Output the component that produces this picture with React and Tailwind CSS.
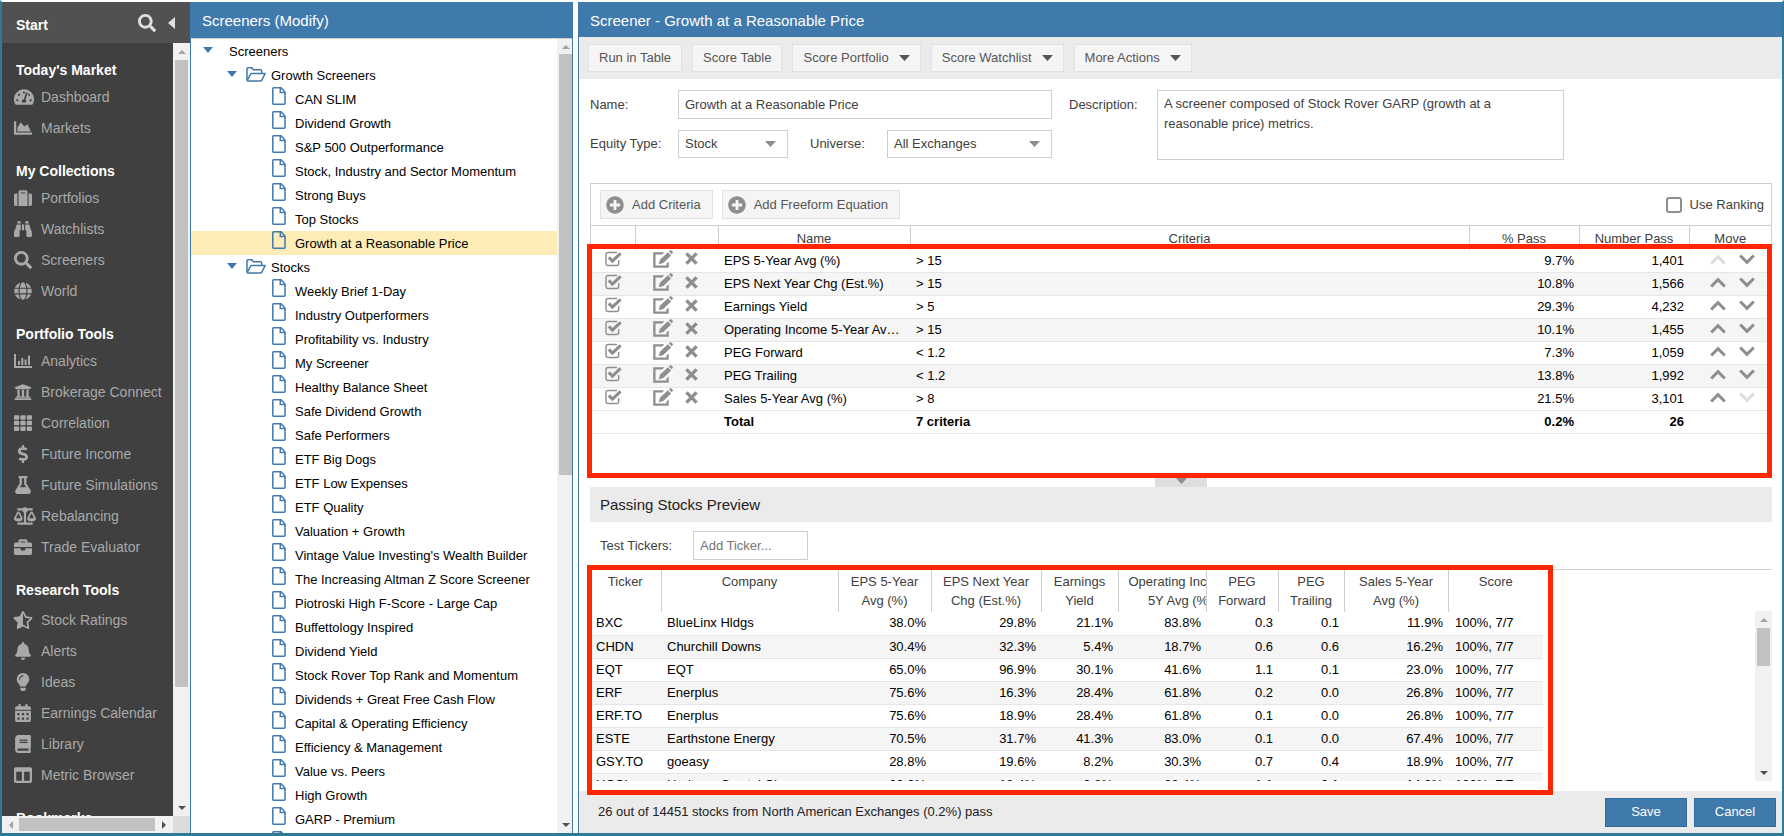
import React from "react";
import {
  FaTachometerAlt, FaChartArea, FaSuitcase, FaBinoculars, FaSearch, FaGlobe, FaUniversity, FaTh,
  FaDollarSign, FaFlask, FaBalanceScale, FaBriefcase, FaStarHalfAlt, FaBell, FaLightbulb, FaCalendarAlt,
  FaBook, FaColumns, FaPlusCircle,
} from "react-icons/fa";

function BarsIcon(props) {
  return (
    <svg viewBox="0 0 18 18" fill="currentColor" {...props}>
      <path d="M0 2h2v12h16v2H0z" />
      <path d="M4 9h2v4H4zM7.300 6h2v7h-2zM10.600 7.500h2v5.500h-2zM14 3.500h2V13h-2z" />
    </svg>
  );
}

function FileIcon() {
  return (
    <svg viewBox="0 0 14 18" className="h-[18px] w-[14px] shrink-0" fill="none" stroke="#4079ac" strokeWidth="1.500">
      <path d="M1.500 .800h7.500l4 4.200v11.500a.700.700 0 0 1-.700.700H1.500a.700.700 0 0 1-.700-.700V1.500a.700.700 0 0 1 .700-.700z" />
      <path d="M8.300 1v4.500h4.600" />
    </svg>
  );
}

function FolderIcon() {
  return (
    <svg viewBox="0 0 20 15" className="h-[15px] w-5 shrink-0" fill="none" stroke="#4079ac" strokeWidth="1.500" strokeLinejoin="round">
      <path d="M1 13V2a1.200 1.200 0 0 1 1.200-1.200h3.600L7.300 2.800h7.200a1.200 1.200 0 0 1 1.200 1.200v2.200" />
      <path d="M1.200 13.300 5 6.500h14.200l-3.400 6.600a1.500 1.500 0 0 1-1.300.800H1.700c-.600 0-.800-.200-.500-.600z" />
    </svg>
  );
}

function Down({ className }) {
  return (
    <svg viewBox="0 0 10 6" preserveAspectRatio="none" className={className} fill="currentColor" aria-hidden="true">
      <path d="M0 0h10L5 6z" />
    </svg>
  );
}
function Up({ className }) {
  return (
    <svg viewBox="0 0 10 6" preserveAspectRatio="none" className={className} fill="currentColor" aria-hidden="true">
      <path d="M0 6h10L5 0z" />
    </svg>
  );
}

function CheckedIcon() {
  return (
    <svg viewBox="0 0 17 16" className="pointer-events-none absolute inset-0 h-4 w-[17px]" fill="none" stroke="#8e8e8e">
      <path d="M13.700 9v3.500a2 2 0 0 1-2 2H3a2 2 0 0 1-2-2V3.500a2 2 0 0 1 2-2h9" strokeWidth="1.400" />
      <path d="M3.800 6.400l3.600 3.700 8.200-7.800" strokeWidth="3.100" />
    </svg>
  );
}

function EditIcon() {
  return (
    <svg viewBox="0 0 20 18" className="h-[18px] w-5" fill="#8e8e8e">
      <path d="M11.300 2.200H.200v15.500h15.500v-6.200l-2.300 2v2H2.500V4.500h6.700z" />
      <path d="M14.900 2.300l3.200 3.100-7.800 7.700-4.500 1.200 1.100-4.500zM15.900 1.400 17 .400c.4-.4.900-.4 1.300 0l1.400 1.400c.4.4.4.900 0 1.300l-1 1.100z" />
    </svg>
  );
}

function CrossIcon() {
  return (
    <svg viewBox="0 0 13 13" className="h-[13px] w-[13px]" stroke="#8e8e8e" strokeWidth="3.400" fill="none">
      <path d="M1.400 1.400l10.200 10.200M11.600 1.400 1.400 11.600" />
    </svg>
  );
}

function Chevron({ up, dim }) {
  return (
    <svg viewBox="0 0 16 11" className={dim ? "h-[11px] w-4 text-[#dcdcdc]" : "h-[11px] w-4 text-[#8e8e8e]"} stroke="currentColor" strokeWidth="3" fill="none">
      <path d={up ? "M1.200 9.500 8 2.700l6.800 6.800" : "M1.200 1.500 8 8.300l6.800-6.800"} />
    </svg>
  );
}

const nav = [
  { title: "Today's Market", items: [["Dashboard", FaTachometerAlt, "h-[18px] w-5 shrink-0"], ["Markets", FaChartArea]] },
  { title: "My Collections", items: [["Portfolios", FaSuitcase], ["Watchlists", FaBinoculars], ["Screeners", FaSearch], ["World", FaGlobe]] },
  {
    title: "Portfolio Tools",
    items: [["Analytics", BarsIcon], ["Brokerage Connect", FaUniversity], ["Correlation", FaTh], ["Future Income", FaDollarSign],
      ["Future Simulations", FaFlask], ["Rebalancing", FaBalanceScale, "h-[18px] w-[22px] shrink-0"], ["Trade Evaluator", FaBriefcase]],
  },
  {
    title: "Research Tools",
    roomy: true,
    items: [["Stock Ratings", FaStarHalfAlt, "h-[18px] w-5 -mx-px shrink-0"], ["Alerts", FaBell], ["Ideas", FaLightbulb], ["Earnings Calendar", FaCalendarAlt],
      ["Library", FaBook], ["Metric Browser", FaColumns]],
  },
  { title: "Bookmarks", items: [] },
];

function Sidebar() {
  return (
    <aside className="flex w-[188px] shrink-0 flex-col bg-[#404040]">
      <header className="flex h-[41px] shrink-0 items-center bg-[#515151] pr-[15px] pl-[14px] font-bold text-white">
        <span className="flex-1 pt-1 text-sm">Start</span>
        <button aria-label="Search" className="text-[#e0e0e0]"><FaSearch className="h-[18px] w-[18px]" /></button>
        <button aria-label="Collapse menu" className="ml-3 text-[#e0e0e0]">
          <svg viewBox="0 0 7 12" className="h-3 w-[7px]" fill="currentColor"><path d="M7 0v12L0 6z" /></svg>
        </button>
      </header>
      <div className="flex min-h-0 flex-1">
        <nav className="min-w-0 flex-1 overflow-hidden text-sm">
          {nav.map((g) => (
            <section key={g.title}>
              <h2 className={g.roomy ? "h-[42px] pt-[15px] pl-[14px] leading-6 font-bold text-white" : "h-[39px] pt-[15px] pl-[14px] leading-6 font-bold text-white"}>{g.title}</h2>
              <ul>
                {g.items.map(([label, Icon, size]) => (
                  <li key={label}>
                    <a href="#" className="flex h-[31px] items-center pb-[2px] pl-3 text-[#a9a9a9]">
                      <span className="flex w-[27px] shrink-0">
                        <Icon className={size || "h-[18px] w-[18px] shrink-0"} />
                      </span>
                      <span className="whitespace-nowrap">{label}</span>
                    </a>
                  </li>
                ))}
              </ul>
            </section>
          ))}
        </nav>
        <div className="flex w-[17px] shrink-0 flex-col items-center bg-[#f1f1f1]">
          <span className="flex h-[17px] items-center text-[#a3a3a3]"><Up className="h-1 w-2" /></span>
          <div className="w-[13px] flex-[627] bg-[#c1c1c1]" />
          <div className="flex-[112]" />
          <span className="flex h-[17px] items-center text-[#505050]"><Down className="h-1 w-2" /></span>
        </div>
      </div>
      <div className="flex h-[17px] shrink-0 bg-[#dcdcdc]">
        <div className="flex flex-1 items-center bg-[#f1f1f1]">
          <span className="flex w-[17px] justify-center text-[#a3a3a3]"><svg viewBox="0 0 4 8" className="h-2 w-1" fill="currentColor"><path d="M4 0v8L0 4z" /></svg></span>
          <div className="h-[13px] w-[136px] bg-[#c1c1c1]" />
          <span className="flex flex-1 justify-center text-[#505050]"><svg viewBox="0 0 4 8" className="h-2 w-1" fill="currentColor"><path d="M0 0v8l4-4z" /></svg></span>
        </div>
        <div className="w-[17px]" />
      </div>
    </aside>
  );
}

const growth = ["CAN SLIM", "Dividend Growth", "S&P 500 Outperformance", "Stock, Industry and Sector Momentum", "Strong Buys", "Top Stocks", "Growth at a Reasonable Price"];
const stocks = ["Weekly Brief 1-Day", "Industry Outperformers", "Profitability vs. Industry", "My Screener", "Healthy Balance Sheet",
  "Safe Dividend Growth", "Safe Performers", "ETF Big Dogs", "ETF Low Expenses", "ETF Quality", "Valuation + Growth",
  "Vintage Value Investing's Wealth Builder", "The Increasing Altman Z Score Screener", "Piotroski High F-Score - Large Cap",
  "Buffettology Inspired", "Dividend Yield", "Stock Rover Top Rank and Momentum", "Dividends + Great Free Cash Flow",
  "Capital & Operating Efficiency", "Efficiency & Management", "Value vs. Peers", "High Growth", "GARP - Premium", "GARP"];

function Leaf({ label, active }) {
  return (
    <li className={active ? "flex h-6 bg-[#fdecb5] pl-[81px]" : "flex h-6 pl-[81px]"}>
      <FileIcon />
      <a href="#" className="pl-[9px] leading-[26px] whitespace-nowrap">{label}</a>
    </li>
  );
}

function Folder({ label }) {
  return (
    <li className="flex h-6 pl-9">
      <Down className="mt-2 h-[6px] w-[10px] shrink-0 text-[#4079ac]" />
      <span className="mt-1 ml-[9px] flex"><FolderIcon /></span>
      <a href="#" className="pl-[5px] leading-[26px] whitespace-nowrap">{label}</a>
    </li>
  );
}

function Tree() {
  return (
    <section className="flex w-[383px] shrink-0 flex-col border-x border-[#4079ac] bg-white text-[13px] text-black">
      <h1 className="h-9 shrink-0 bg-[#4079ac] pl-[11px] text-[15px] leading-[37px] text-white">Screeners (Modify)</h1>
      <div className="flex min-h-0 flex-1 border-t border-[#d0d0d0]">
        <ul className="min-w-0 flex-1 overflow-hidden">
          <li className="flex h-6 pl-3">
            <Down className="mt-2 h-[6px] w-[10px] shrink-0 text-[#4079ac]" />
            <a href="#" className="pl-4 leading-[26px]">Screeners</a>
          </li>
          <Folder label="Growth Screeners" />
          {growth.map((l) => <Leaf key={l} label={l} active={l === "Growth at a Reasonable Price"} />)}
          <Folder label="Stocks" />
          {stocks.map((l) => <Leaf key={l} label={l} />)}
        </ul>
        <div className="flex w-[15px] shrink-0 flex-col items-end bg-[#f1f1f1]">
          <span className="flex h-[15px] w-[13px] items-center justify-center text-[#a3a3a3]"><Up className="h-1 w-2" /></span>
          <div className="w-[13px] flex-[421] bg-[#c1c1c1]" />
          <div className="flex-[341]" />
          <span className="flex h-[17px] w-[13px] items-center justify-center text-[#505050]"><Down className="h-1 w-2" /></span>
        </div>
      </div>
    </section>
  );
}

const criteria = [
  ["EPS 5-Year Avg (%)", "> 15", "9.7%", "1,401"],
  ["EPS Next Year Chg (Est.%)", "> 15", "10.8%", "1,566"],
  ["Earnings Yield", "> 5", "29.3%", "4,232"],
  ["Operating Income 5-Year Avg (%)", "> 15", "10.1%", "1,455"],
  ["PEG Forward", "< 1.2", "7.3%", "1,059"],
  ["PEG Trailing", "< 1.2", "13.8%", "1,992"],
  ["Sales 5-Year Avg (%)", "> 8", "21.5%", "3,101"],
];

function ToolButton({ children, menu }) {
  return (
    <button className="flex h-7 items-center border border-[#e2e2e2] bg-[#f5f5f5] px-[10px] whitespace-nowrap text-[#555]">
      {children}
      {menu && <Down className="ml-[10px] h-[6px] w-[11px] text-[#555]" />}
    </button>
  );
}

function Dropdown({ id, value, className }) {
  return (
    <span className={className}>
      <select id={id} className="h-7 w-full appearance-none border border-[#cfcfcf] bg-white pl-[6px] text-[#404040]">
        <option>{value}</option>
      </select>
      <Down className="pointer-events-none absolute top-[11px] right-3 h-[6px] w-[11px] text-[#8e8e8e]" />
    </span>
  );
}

function CriteriaGrid() {
  return (
    <div className="relative h-[295px] shrink-0 border border-b-0 border-[#cfcfcf]">
      <div className="flex h-[41px] items-center gap-[9px] pr-[7px] pl-[9px] text-[#555]">
        <button className="flex h-[29px] items-center border border-[#e2e2e2] bg-[#f5f5f5] pr-[11px] pl-[5px]"><FaPlusCircle className="mr-2 h-[18px] w-[18px] text-[#8e8e8e]" />Add Criteria</button>
        <button className="flex h-[29px] items-center border border-[#e2e2e2] bg-[#f5f5f5] pr-[11px] pl-[5px]"><FaPlusCircle className="mr-2 h-[18px] w-[18px] text-[#8e8e8e]" />Add Freeform Equation</button>
        <label className="ml-auto flex items-center gap-2 text-[#404040]">
          <input type="checkbox" className="h-4 w-4 appearance-none rounded-[3px] border-2 border-[#8e8e8e] bg-white" />
          Use Ranking
        </label>
      </div>
      <table className="w-full table-fixed border-collapse">
        <colgroup>
          <col className="w-[44px]" /><col className="w-[83px]" /><col className="w-[192px]" /><col />
          <col className="w-[110px]" /><col className="w-[110px]" /><col className="w-[82px]" />
        </colgroup>
        <thead>
          <tr className="h-6 border-t border-[#cfcfcf] text-[#404040]">
            {["", "", "Name", "Criteria", "% Pass", "Number Pass", "Move"].map((h, i) => (
              <th key={i} scope="col" className="border-r border-[#cfcfcf] p-0 pt-[2px] leading-5 font-normal last:border-r-0">{h}</th>
            ))}
          </tr>
        </thead>
        <tbody className="text-black">
          {criteria.map(([name, rule, pct, num], i) => (
            <tr key={name} className="h-[23px] border-b border-[#e6e6e6] odd:bg-white even:bg-[#f5f5f5]">
              <td className="p-0 pl-[14px] align-top">
                <span className="relative mt-px block h-4 w-[17px]">
                  <input type="checkbox" defaultChecked aria-label={name} className="block h-4 w-4 appearance-none" />
                  <CheckedIcon />
                </span>
              </td>
              <td className="p-0 pl-[18px] align-top">
                <span className="flex items-center gap-3">
                  <button aria-label="Edit"><EditIcon /></button>
                  <button aria-label="Remove"><CrossIcon /></button>
                </span>
              </td>
              <td className="truncate px-[6px] pt-0 pb-px leading-[21px]">{name}</td>
              <td className="px-[6px] pt-0 pb-px leading-[21px]">{rule}</td>
              <td className="p-0 pr-[5px] pb-px text-right leading-[21px]">{pct}</td>
              <td className="p-0 pr-[5px] pb-px text-right leading-[21px]">{num}</td>
              <td className="p-0 align-top">
                <span className="flex justify-center gap-[13px] pt-1 pl-1">
                  <button aria-label="Move up"><Chevron up dim={i === 0} /></button>
                  <button aria-label="Move down"><Chevron dim={i === criteria.length - 1} /></button>
                </span>
              </td>
            </tr>
          ))}
          <tr className="h-[23px] border-b border-[#e6e6e6] font-bold">
            <td /><td />
            <td className="px-[6px] pt-0 pb-px leading-[21px]">Total</td>
            <td className="px-[6px] pt-0 pb-px leading-[21px]">7 criteria</td>
            <td className="p-0 pr-[5px] pb-px text-right leading-[21px]">0.2%</td>
            <td className="p-0 pr-[5px] pb-px text-right leading-[21px]">26</td>
            <td />
          </tr>
        </tbody>
      </table>
      <div className="pointer-events-none absolute top-[60px] -right-px bottom-0 -left-1 border-[5px] border-[#ff2600]" />
    </div>
  );
}

const heads = [["Ticker"], ["Company"], ["EPS 5-Year", "Avg (%)"], ["EPS Next Year", "Chg (Est.%)"], ["Earnings", "Yield"],
  ["Operating Income", "5Y Avg (%)"], ["PEG", "Forward"], ["PEG", "Trailing"], ["Sales 5-Year", "Avg (%)"], ["Score"]];

const results = [
  ["BXC", "BlueLinx Hldgs", "38.0%", "29.8%", "21.1%", "83.8%", "0.3", "0.1", "11.9%"],
  ["CHDN", "Churchill Downs", "30.4%", "32.3%", "5.4%", "18.7%", "0.6", "0.6", "16.2%"],
  ["EQT", "EQT", "65.0%", "96.9%", "30.1%", "41.6%", "1.1", "0.1", "23.0%"],
  ["ERF", "Enerplus", "75.6%", "16.3%", "28.4%", "61.8%", "0.2", "0.0", "26.8%"],
  ["ERF.TO", "Enerplus", "75.6%", "18.9%", "28.4%", "61.8%", "0.1", "0.0", "26.8%"],
  ["ESTE", "Earthstone Energy", "70.5%", "31.7%", "41.3%", "83.0%", "0.1", "0.0", "67.4%"],
  ["GSY.TO", "goeasy", "28.8%", "19.6%", "8.2%", "30.3%", "0.7", "0.4", "18.9%"],
  ["HCCI", "Heritage-Crystal Clean", "30.9%", "18.4%", "9.8%", "22.4%", "1.1", "0.1", "14.9%"],
];

function ResultsGrid() {
  return (
    <div className="relative min-h-0 flex-1 border-t border-[#cfcfcf] pb-[10px]">
      <div className="flex h-full overflow-hidden">
        <div className="min-w-0 flex-1">
          <table className="w-[953px] table-fixed border-collapse">
            <colgroup>
              <col className="w-[71px]" /><col className="w-[177px]" /><col className="w-[93px]" /><col className="w-[110px]" />
              <col className="w-[77px]" /><col className="w-[88px]" /><col className="w-[72px]" /><col className="w-[66px]" />
              <col className="w-[104px]" /><col className="w-[95px]" />
            </colgroup>
            <thead>
              <tr className="h-[42px] text-[#404040]">
                {heads.map((lines) => (
                  <th key={lines.join(" ")} scope="col" className="overflow-hidden border-r border-[#cfcfcf] px-[10px] py-0 pt-[2px] align-top leading-[19px] font-normal whitespace-nowrap last:border-r-0">
                    <span className="block w-max min-w-full">{lines.map((l) => <span key={l} className="block">{l}</span>)}</span>
                  </th>
                ))}
              </tr>
            </thead>
            <tbody className="text-black">
              {results.map((r) => (
                <tr key={r[0]} className="h-[23px] border-b border-[#e6e6e6] odd:bg-white even:bg-[#f5f5f5]">
                  {r.map((c, i) => (
                    <td key={i} className={i < 2 ? "truncate px-[6px] pt-0 pb-px leading-[21px]" : "p-0 pr-[5px] pb-px text-right leading-[21px]"}>{c}</td>
                  ))}
                  <td className="p-0 pb-px pl-[7px] leading-[21px]">100%, 7/7</td>
                </tr>
              ))}
            </tbody>
          </table>
        </div>
        <div className="mt-[41px] flex w-[17px] shrink-0 flex-col items-center bg-[#f1f1f1]">
          <span className="flex h-[17px] items-center text-[#a3a3a3]"><Up className="h-1 w-2" /></span>
          <div className="w-[13px] flex-[38] bg-[#c1c1c1]" />
          <div className="flex-[97]" />
          <span className="flex h-[17px] items-center text-[#505050]"><Down className="h-1 w-2" /></span>
        </div>
      </div>
      <div className="pointer-events-none absolute -top-[5px] -bottom-1 -left-[3px] z-10 w-[966px] border-[5px] border-[#ff2600]" />
    </div>
  );
}

function Screener() {
  return (
    <main className="flex min-w-0 flex-1 flex-col border-l border-[#4079ac] bg-white text-[13px] text-[#404040]">
      <h1 className="h-[35px] shrink-0 bg-[#4079ac] pl-[11px] text-[15px] leading-[37px] text-white">Screener - Growth at a Reasonable Price</h1>
      <div className="flex h-[42px] shrink-0 items-center gap-[10px] bg-[#ebebeb] pl-[9px]">
        <ToolButton>Run in Table</ToolButton>
        <ToolButton>Score Table</ToolButton>
        <ToolButton menu>Score Portfolio</ToolButton>
        <ToolButton menu>Score Watchlist</ToolButton>
        <ToolButton menu>More Actions</ToolButton>
      </div>
      <div className="flex min-h-0 flex-1 flex-col pr-[10px] pl-[11px]">
        <form className="flex h-[104px] shrink-0 pt-[11px]">
          <div className="flex w-[462px] flex-col gap-[11px]">
            <div className="flex items-center">
              <label htmlFor="name" className="w-[88px]">Name:</label>
              <input id="name" defaultValue="Growth at a Reasonable Price" className="h-[29px] min-w-0 flex-1 border border-[#cfcfcf] px-[6px]" />
            </div>
            <div className="flex items-center">
              <label htmlFor="equity" className="w-[88px]">Equity Type:</label>
              <Dropdown id="equity" value="Stock" className="relative w-[110px]" />
              <label htmlFor="universe" className="ml-[22px] w-[77px]">Universe:</label>
              <Dropdown id="universe" value="All Exchanges" className="relative flex-1" />
            </div>
          </div>
          <label htmlFor="desc" className="ml-[17px] w-[88px] pt-[5px] leading-5">Description:</label>
          <textarea id="desc" className="h-[70px] w-[407px] resize-none overflow-hidden border border-[#cfcfcf] px-[6px] py-[3px] leading-5" defaultValue="A screener composed of Stock Rover GARP (growth at a reasonable price) metrics." />
        </form>
        <CriteriaGrid />
        <button aria-label="Collapse criteria" className="flex h-[9px] w-[52px] shrink-0 justify-center self-center bg-[#dedede]">
          <Down className="h-[6px] w-[11px] text-[#8e8e8e]" />
        </button>
        <h2 className="h-[35px] shrink-0 bg-[#ebebeb] pl-[10px] text-[15px] leading-[35px] text-[#222]">Passing Stocks Preview</h2>
        <div className="flex h-[47px] shrink-0 items-center pl-[10px]">
          <label htmlFor="ticker" className="w-[93px]">Test Tickers:</label>
          <input id="ticker" placeholder="Add Ticker..." className="h-[29px] w-[115px] border border-[#cfcfcf] px-[6px] placeholder:text-[#757575]" />
        </div>
        <ResultsGrid />
      </div>
      <footer className="flex h-[42px] shrink-0 items-center gap-[7px] bg-[#ebebeb] pr-[6px] pl-[19px]">
        <span className="flex-1 text-[#222]">26 out of 14451 stocks from North American Exchanges (0.2%) pass</span>
        <button className="h-[29px] w-[82px] border border-[#356a9c] bg-[#4079ac] text-white">Save</button>
        <button className="h-[29px] w-[82px] border border-[#356a9c] bg-[#4079ac] text-white">Cancel</button>
      </footer>
    </main>
  );
}

export default function App() {
  return (
    <div className="flex h-screen min-h-[600px] w-full overflow-hidden border-x-2 border-t-2 border-b-[3px] border-x-[#2f7b96] border-t-white border-b-[#2f7b96] bg-white font-['Liberation_Sans',Arial,sans-serif]">
      <Sidebar />
      <Tree />
      <div className="w-[5px] shrink-0" />
      <Screener />
    </div>
  );
}
